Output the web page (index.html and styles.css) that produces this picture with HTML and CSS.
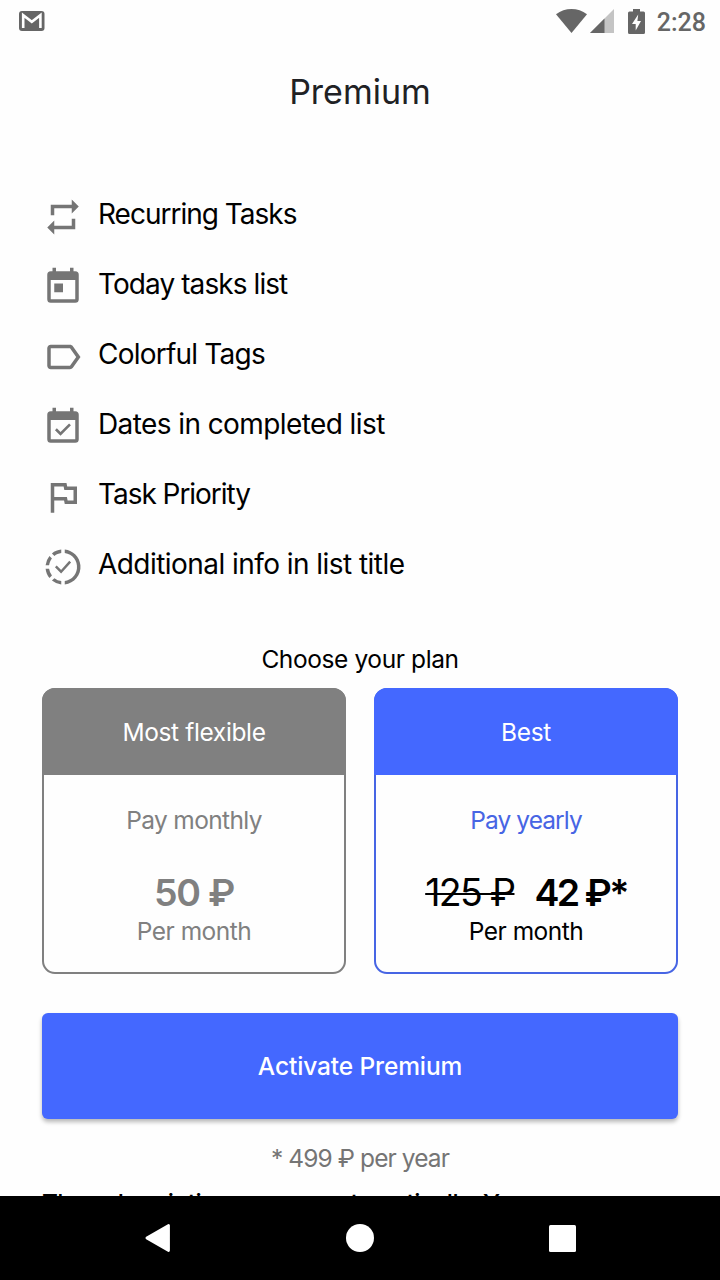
FILE: index.html
```html
<!DOCTYPE html>
<html lang="en">
<head>
<meta charset="utf-8">
<title>Premium</title>
<link rel="stylesheet" href="styles.css">
</head>
<body>
<div class="screen">
  <div class="status">
    <svg class="mail" width="26" height="20" viewBox="0 0 26 20"><rect width="25.5" height="20" rx="3" fill="#666"/><path d="M4.2 17V4.2L12.8 10.8 21.4 4.2V17" fill="none" stroke="#fff" stroke-width="2.6"/></svg>
    <svg class="wifi" width="31" height="24" viewBox="0 0 31 24"><path d="M0 5.2C9-1.7 22-1.7 31 5.2L15.5 24Z" fill="#666"/></svg>
    <svg class="signal" width="24" height="24" viewBox="0 0 24 24"><path d="M24 0V24H0Z" fill="#c4c4c4"/><path d="M14.5 9.5V24H0Z" fill="#666"/></svg>
    <svg class="battery" width="17" height="25" viewBox="0 0 17 25"><path d="M5 0h7v2.5h3.5A1.5 1.5 0 0 1 17 4v19.500a1.500 1.500 0 0 1-1.500 1.500h-14A1.500 1.500 0 0 1 0 23.500V4a1.500 1.500 0 0 1 1.500-1.500H5Z" fill="#666"/><path d="M10.200 5.500 4 15h3.700v6.500L13 12H9.400Z" fill="#fff"/></svg>
    <span class="clock">2:28</span>
  </div>
  <main class="content">
    <h1 class="title">Premium</h1>
    <ul class="features">
      <li class="feature"><svg class="icon" viewBox="0 0 24 24"><path d="M7 7h10v3l4-4-4-4v3H5v6h2V7zm10 10H7v-3l-4 4 4 4v-3h12v-6h-2v4z"/></svg><span class="label recurring">Recurring Tasks</span></li>
      <li class="feature"><svg class="icon" viewBox="0 0 24 24"><path d="M19 3h-1V1h-2v2H8V1H6v2H5a2 2 0 0 0-2 2v14a2 2 0 0 0 2 2h14a2 2 0 0 0 2-2V5a2 2 0 0 0-2-2zm0 16H5V8h14v11zM7 10h5v5H7z"/></svg><span class="label today">Today tasks list</span></li>
      <li class="feature"><svg class="icon" viewBox="0 0 24 24"><path d="M17.630 5.840C17.270 5.330 16.670 5 16 5L5 5.010C3.900 5.010 3 5.900 3 7v10c0 1.100.9 1.990 2 1.990L16 19c.67 0 1.270-.33 1.630-.84L22 12l-4.370-6.160zM16 17H5V7h11l3.550 5L16 17z"/></svg><span class="label tags">Colorful Tags</span></li>
      <li class="feature"><svg class="icon" viewBox="0 0 24 24"><path d="M19 3h-1V1h-2v2H8V1H6v2H5a2 2 0 0 0-2 2v14a2 2 0 0 0 2 2h14a2 2 0 0 0 2-2V5a2 2 0 0 0-2-2zm0 16H5V8h14v11zM16.530 11.060 15.470 10l-4.880 4.880-2.120-2.120-1.060 1.060L10.590 17z"/></svg><span class="label dates">Dates in completed list</span></li>
      <li class="feature"><svg class="icon" viewBox="0 0 24 24"><path d="M12.360 6l.4 2H18v6h-3.360l-.4-2H7V6h5.360M14 4H5v17h2v-7h5.600l.4 2h7V6h-5.600L14 4z"/></svg><span class="label priority">Task Priority</span></li>
      <li class="feature"><svg class="icon" viewBox="0 0 24 24"><path d="M13 2.030v2.020c4.390.54 7.500 4.530 6.960 8.920-.46 3.640-3.320 6.530-6.960 6.960v2c5.500-.55 9.500-5.430 8.950-10.930-.45-4.750-4.220-8.500-8.950-8.970m-2 .03c-1.950.19-3.810.94-5.330 2.200L7.100 5.740c1.120-.9 2.470-1.480 3.900-1.680v-2M4.260 5.670A9.885 9.885 0 0 0 2.050 11h2c.19-1.420.75-2.770 1.640-3.900L4.260 5.670M2.060 13c.2 1.960.97 3.810 2.210 5.330l1.420-1.430A8.002 8.002 0 0 1 4.060 13h-2m5.040 5.370-1.430 1.370A9.994 9.994 0 0 0 11 22v-2a8.002 8.002 0 0 1-3.900-1.630"/><path class="tick" d="M7.900 11.700 10.900 14.700 16.100 8.900"/></svg><span class="label info">Additional info in list title</span></li>
    </ul>
    <h2 class="choose">Choose your plan</h2>
    <div class="plans">
      <section class="plan monthly">
        <div class="plan-head flexible">Most flexible</div>
        <div class="period pay-monthly">Pay monthly</div>
        <div class="price"><b class="amount fifty">50 ₽</b></div>
        <div class="per">Per month</div>
      </section>
      <section class="plan yearly">
        <div class="plan-head best">Best</div>
        <div class="period pay-yearly">Pay yearly</div>
        <div class="price"><s class="old">125 ₽</s><b class="amount new">42 ₽*</b></div>
        <div class="per">Per month</div>
      </section>
    </div>
    <button class="activate">Activate Premium</button>
    <p class="note">* 499 ₽ per year</p>
    <p class="terms">The subscription renews automatically. You</p>
  </main>
  <nav class="nav">
    <svg class="back" width="26" height="30" viewBox="0 0 26 30"><path d="M1.800 15 23.600 2.400V27.600Z" fill="#fff" stroke="#fff" stroke-width="2.600" stroke-linejoin="round"/></svg>
    <svg width="28" height="28" viewBox="0 0 28 28"><circle cx="14" cy="14" r="14" fill="#fff"/></svg>
    <svg class="recents" width="27" height="27" viewBox="0 0 27 27"><rect width="27" height="27" rx="1.500" fill="#fff"/></svg>
  </nav>
</div>
</body>
</html>
```
FILE: styles.css
```css
* { box-sizing: border-box; }
body { margin: 0; background: #fff; }
.screen {
  width: 720px;
  height: 1280px;
  display: flex;
  flex-direction: column;
  overflow: hidden;
  background: #fefefe;
  font-family: Inter, "Open Sans", sans-serif;
  color: #000;
}
.status {
  flex: none;
  height: 42px;
  display: flex;
  align-items: center;
  padding: 0 14px 0 19px;
}
.status svg { flex: none; }
.wifi { margin-left: auto; }
.signal { margin-left: 3px; }
.battery { margin-left: 14px; }
.clock {
  margin-left: 12px;
  font: 500 25px/42px Roboto, sans-serif;
  color: #666;
  padding-top: 3px;
}
.content {
  flex: 1;
  min-height: 0;
  overflow: hidden;
  padding: 0 42px;
  display: flex;
  flex-direction: column;
}
.title, .choose, .note, .terms { margin: 0; font-weight: 400; text-align: center; white-space: nowrap; flex: none; }
.title { font-size: 34px; line-height: 99px; height: 140px; color: #202124; }
.features { list-style: none; margin: 0; padding: 0; flex: none; }
.feature { display: flex; align-items: center; gap: 14px; height: 70px; }
.icon { width: 42px; height: 42px; fill: #757575; flex: none; }
.tick { fill: none; stroke: #757575; stroke-width: 1.4; }
.label { font-size: 28px; line-height: 40px; padding-bottom: 7px; white-space: nowrap; }
.recurring { letter-spacing: -1px; }
.today { letter-spacing: -0.92px; }
.tags { letter-spacing: -0.78px; }
.dates { letter-spacing: -0.59px; }
.priority { letter-spacing: -1.04px; }
.info { letter-spacing: -0.55px; }
.choose { font-size: 24.5px; line-height: 34px; margin-top: 40px; letter-spacing: -0.4px; }
.plans { flex: none; display: flex; gap: 28px; margin-top: 12px; }
.plan {
  flex: 1;
  height: 286px;
  border: 2px solid #808080;
  border-radius: 13px;
  text-align: center;
  font-size: 24.5px;
  line-height: 34px;
  white-space: nowrap;
  color: #808080;
}
.yearly { border-color: #4765e4; color: #000; }
.plan-head {
  height: 87px;
  margin: -2px -2px 0;
  border-radius: 13px 13px 0 0;
  line-height: 88px;
  color: #fff;
  background: #808080;
}
.yearly .plan-head { background: #4468ff; }
.flexible { letter-spacing: -0.37px; }
.best { letter-spacing: -0.3px; }
.period { margin-top: 28px; }
.pay-monthly { letter-spacing: -0.63px; }
.pay-yearly { color: #4765e4; letter-spacing: -0.9px; }
.price { display: flex; justify-content: center; gap: 20px; margin-top: 32px; font-size: 37.5px; line-height: 48px; }
.amount { font-weight: 600; }
.fifty { letter-spacing: -1.3px; }
.old { letter-spacing: -1.7px; text-decoration-thickness: 2px; }
.new { letter-spacing: -2.6px; }
.per { margin-top: -3px; letter-spacing: -0.5px; }
.activate {
  flex: none;
  height: 106px;
  margin-top: 39px;
  border: 0;
  border-radius: 6px;
  background: #4468ff;
  color: #fff;
  font: 500 24.5px/34px Inter, "Open Sans", sans-serif;
  letter-spacing: -0.12px;
  box-shadow: 0 3px 4px rgba(0, 0, 0, 0.28);
}
.note { font-size: 24.5px; line-height: 34px; margin-top: 22px; color: #757575; letter-spacing: -0.9px; }
.terms { font-size: 24.5px; line-height: 34px; margin-top: 11px; text-align: left; font-weight: 500; letter-spacing: -0.62px; }
.nav {
  flex: none;
  height: 84px;
  background: #000;
  display: grid;
  grid-template-columns: 314px 92px 314px;
  align-items: center;
  justify-items: center;
}
.back { margin-left: 2px; }
.recents { margin-right: 2px; }
```
